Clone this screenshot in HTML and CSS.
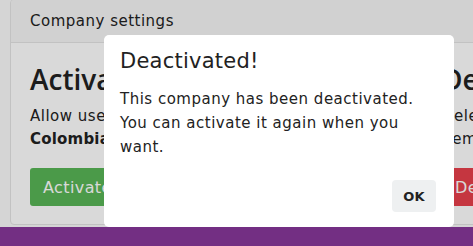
FILE: index.html
```html
<!DOCTYPE html>
<html lang="en">
<head>
<meta charset="utf-8">
<title>Company settings</title>
<link rel="stylesheet" href="styles.css">
</head>
<body>
<div class="page">
  <main class="main">
    <section class="card">
      <header class="card-header">Company settings</header>
      <div class="card-body">
        <div class="col">
          <h2 class="col-title">Activate</h2>
          <p class="col-text">Allow users of this company to sign in again.<br><strong>Colombia</strong></p>
          <button class="btn btn-success">Activate</button>
        </div>
        <div class="col">
          <h2 class="col-title">Delete</h2>
          <p class="col-text">Delete this company and all of its data.<br>Remember: this cannot be undone.</p>
          <button class="btn btn-danger">Delete</button>
        </div>
      </div>
    </section>
  </main>
  <footer class="footer"></footer>
</div>
<div class="backdrop"></div>
<div class="modal" role="dialog">
  <h3 class="modal-title">Deactivated!</h3>
  <p class="modal-text">This company has been deactivated. You can activate it again when you want.</p>
  <div class="modal-actions">
    <button class="btn-ok">OK</button>
  </div>
</div>
</body>
</html>
```
FILE: styles.css
```css
* { box-sizing: border-box; }
html, body { margin: 0; padding: 0; }
body {
  font-family: "DejaVu Sans", "Noto Sans", sans-serif;
  color: #222;
  background: #fbfbfb;
  width: 473px;
  height: 246px;
  overflow: hidden;
}
.page {
  display: flex;
  flex-direction: column;
  height: 246px;
}
.main {
  padding: 0 0 2px 10px;
  overflow: hidden;
}
.card {
  width: 900px;
  margin-top: -1px;
  border: 1px solid #e4e4e4;
  border-radius: 4px;
  background: #fff;
  overflow: hidden;
}
.card-header {
  height: 43px;
  padding: 0 19px;
  display: flex;
  align-items: center;
  font-size: 15px;
  letter-spacing: 0.5px;
  background: #f6f6f6;
  border-bottom: 1px solid #e4e4e4;
}
.card-body {
  display: grid;
  grid-template-columns: 383px 383px;
  gap: 29px;
  padding: 16px 19px 18px;
}
.col-title {
  margin: 0 0 6px;
  font-family: "Open Sans", "DejaVu Sans", sans-serif;
  font-size: 28px;
  font-weight: 600;
  line-height: 40px;
}
.col-text {
  margin: 0 0 17px;
  font-size: 15px;
  line-height: 23px;
  letter-spacing: 0.5px;
}
.col-text strong {
  letter-spacing: 0.2px;
}
.btn {
  font-family: inherit;
  font-size: 16px;
  letter-spacing: 0.4px;
  height: 38px;
  padding: 0 13px;
  border: 0;
  border-radius: 3px;
  color: #fff;
}
.btn-success { background: #59b656; }
.btn-danger { background: #e8404c; }
.footer {
  flex: 1;
  background: #88389a;
}
.backdrop {
  position: fixed;
  inset: 0;
  background: rgba(0, 0, 0, 0.15);
}
.modal {
  position: fixed;
  left: 104px;
  top: 35px;
  width: 350px;
  height: 192px;
  background: #fff;
  border-radius: 5px;
  padding: 12px 18px 15px 16px;
  display: flex;
  flex-direction: column;
}
.modal-title {
  margin: 0;
  font-size: 21px;
  font-weight: 400;
  line-height: 28px;
  letter-spacing: 0.25px;
}
.modal-text {
  margin: 12px 0 0;
  font-size: 15px;
  line-height: 24px;
  letter-spacing: 0.5px;
}
.modal-actions {
  margin-top: auto;
  display: flex;
  justify-content: flex-end;
}
.btn-ok {
  font-family: inherit;
  width: 44px;
  height: 32px;
  border: 0;
  border-radius: 4px;
  background: #eef0f1;
  color: #222;
  font-size: 13px;
  font-weight: 700;
  letter-spacing: 0.3px;
}
```
